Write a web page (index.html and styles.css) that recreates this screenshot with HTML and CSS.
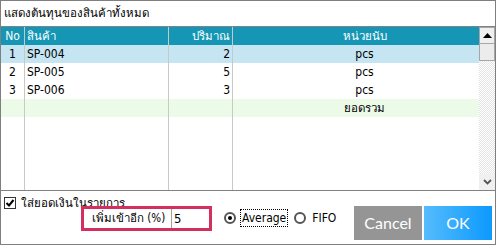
FILE: index.html
```html
<!DOCTYPE html>
<html>
<head>
<meta charset="utf-8">
<link rel="stylesheet" href="styles.css">
</head>
<body>
<div class="dialog">
  <div class="title th">แสดงต้นทุนของสินค้าทั้งหมด</div>
  <div class="gridwrap">
    <div class="grid">
      <div class="h c1">No</div><div class="h c2 th">สินค้า</div><div class="h c3 th">ปริมาณ</div><div class="h c4 th">หน่วยนับ</div>
      <div class="sel c1">1</div><div class="sel c2">SP-004</div><div class="sel c3">2</div><div class="sel c4">pcs</div>
      <div class="c1">2</div><div class="c2">SP-005</div><div class="c3">5</div><div class="c4">pcs</div>
      <div class="c1">3</div><div class="c2">SP-006</div><div class="c3">3</div><div class="c4">pcs</div>
      <div class="tot c1"></div><div class="tot c2"></div><div class="tot c3"></div><div class="tot c4 th">ยอดรวม</div>
      <div class="c1"></div><div class="c2"></div><div class="c3"></div><div class="c4"></div>
    </div>
    <div class="vscroll">
      <div class="sb-up"><svg width="9" height="5" viewBox="0 0 9 5"><path d="M0 5 L4.5 0 L9 5 Z" fill="#000"/></svg></div>
      <div class="sb-thumb"></div>
      <div class="sb-track"></div>
      <div class="sb-down"><svg width="9" height="6" viewBox="0 0 9 6"><path d="M1 1 L4.5 4.5 L8 1" fill="none" stroke="#555" stroke-width="1.8"/></svg></div>
    </div>
  </div>
  <div class="panel">
    <div class="chkrow">
      <span class="chk"><svg width="10" height="10" viewBox="0 0 10 10"><path d="M1.5 5 L4 7.5 L8.5 2" fill="none" stroke="#000" stroke-width="2"/></svg></span>
      <span class="chklabel th">ใส่ยอดเงินในรายการ</span>
    </div>
    <div class="ctrlrow">
      <div class="markup"><span class="mlabel th">เพิ่มเข้าอีก (%)</span><span class="minput">5</span></div>
      <div class="radio first"><span class="rdot on"></span><span class="rtext focus">Average</span></div>
      <div class="radio second"><span class="rdot"></span><span class="rtext">FIFO</span></div>
      <div class="btn cancel">Cancel</div>
      <div class="btn ok">OK</div>
    </div>
  </div>
</div>
</body>
</html>
```
FILE: styles.css
```css
* { box-sizing: border-box; }
body {
  margin: 0;
  background: #fff;
  font-family: "DejaVu Sans Condensed", "DejaVu Sans", sans-serif;
  font-size: 12px;
  color: #000;
}
.th { font-size: 11.5px; }
.dialog {
  width: 496px;
  height: 245px;
  border: 1px solid #7f7f7f;
  display: flex;
  flex-direction: column;
}
.title {
  height: 26px;
  line-height: 25px;
  padding-left: 3px;
  border-bottom: 1px solid #828282;
}
.gridwrap {
  height: 164px;
  display: flex;
  border-bottom: 1px solid #828282;
}
.grid {
  width: 478px;
  display: grid;
  grid-template-columns: 24px 144px 64px 246px;
  grid-template-rows: 18px 18px 18px 18px 18px 1fr;
}
.grid > div {
  line-height: 18px;
  white-space: nowrap;
  overflow: hidden;
}
.c1, .c2, .c3 { border-right: 1px solid #c8c8c8; }
.c1 { text-align: center; }
.c2 { padding-left: 2px; }
.c3 { text-align: right; padding-right: 2px; }
.c4 { text-align: center; padding-left: 17px; }
.h { background: #1596b5; color: #fff; }
.sel { background: #c5e5f3; }
.tot { background: #ecfbe8; }
.vscroll {
  width: 16px;
  display: flex;
  flex-direction: column;
}
.sb-up {
  height: 17px;
  border: 1px solid #a6a6a6;
  background: #efefef;
  display: flex;
  align-items: center;
  justify-content: center;
}
.sb-thumb {
  height: 17px;
  border: 1px solid #a6a6a6;
  border-top: none;
  background: #ececec;
}
.sb-track {
  flex: 1;
  background-color: #fff;
  background-image: repeating-conic-gradient(#e4e4e4 0 25%, #fff 0 50%);
  background-size: 2px 2px;
}
.sb-down {
  height: 16px;
  background: #f0f0f0;
  display: flex;
  align-items: center;
  justify-content: center;
}
.panel {
  flex: 1;
  padding: 4px 3px 0 3px;
  display: flex;
  flex-direction: column;
}
.chkrow {
  height: 11px;
  display: flex;
  align-items: flex-start;
}
.chk {
  width: 12px;
  height: 12px;
  margin-top: 2px;
  border: 1px solid #333;
  background: #fff;
  display: flex;
  align-items: center;
  justify-content: center;
}
.chklabel {
  margin-left: 5px;
  line-height: 16px;
}
.ctrlrow {
  display: flex;
  align-items: flex-start;
}
.markup {
  margin-left: 77px;
  width: 131px;
  height: 25px;
  border: 3px solid #d3305f;
  display: flex;
}
.mlabel {
  width: 87px;
  padding-left: 8px;
  line-height: 19px;
  white-space: nowrap;
}
.minput {
  flex: 1;
  border-left: 1px solid #a0a0a0;
  padding-left: 2px;
  line-height: 19px;
  font-size: 13px;
}
.radio {
  height: 18px;
  margin-top: 3px;
  display: flex;
  align-items: center;
}
.radio.first { margin-left: 12px; }
.radio.second { margin-left: 6px; }
.rdot {
  width: 12px;
  height: 12px;
  border-radius: 50%;
  border: 2px solid #555;
  background: #fff;
  display: flex;
  align-items: center;
  justify-content: center;
}
.rdot.on::after {
  content: "";
  width: 4px;
  height: 4px;
  border-radius: 50%;
  background: #000;
}
.rtext {
  margin-left: 4px;
  height: 18px;
  line-height: 16px;
  padding: 0 1px;
  border: 1px dotted transparent;
}
.rtext.focus { border-color: #000; }
.btn {
  width: 68px;
  height: 34px;
  color: #fff;
  font-family: Lato, sans-serif;
  font-size: 16px;
  line-height: 34px;
  text-align: center;
}
.cancel {
  margin-left: auto;
  background: #959595;
}
.ok {
  margin-left: 2px;
  background: linear-gradient(to right, #55bcfc, #0c99fe);
}
```
